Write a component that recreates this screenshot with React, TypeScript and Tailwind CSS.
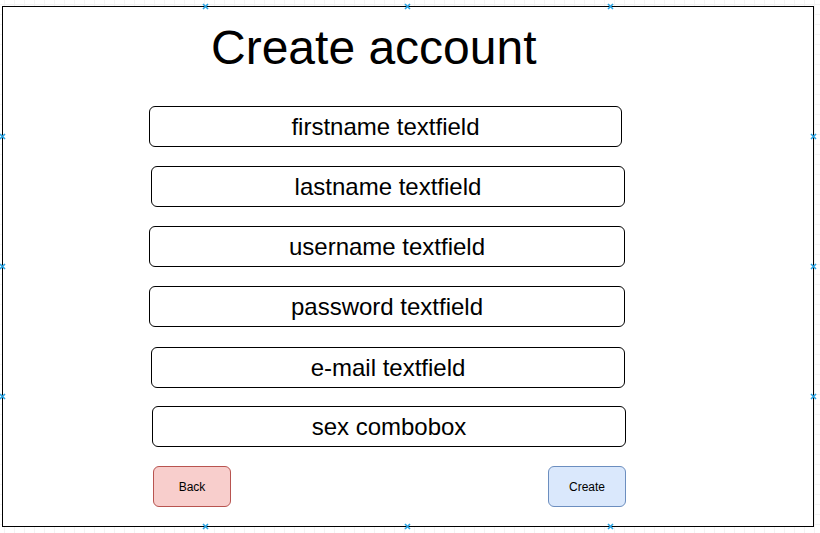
import React from "react";

const fields = [
  { label: "firstname textfield", cls: "ml-[146px] w-[473px] mt-[34px]" },
  { label: "lastname textfield", cls: "ml-[148px] w-[474px] mt-[19px]" },
  { label: "username textfield", cls: "ml-[146px] w-[476px] mt-[19px]" },
  { label: "password textfield", cls: "ml-[146px] w-[476px] mt-[19px]" },
  { label: "e-mail textfield", cls: "ml-[148px] w-[474px] mt-[20px]" },
  { label: "sex combobox", cls: "ml-[149px] w-[474px] mt-[18px]" },
];

// draw.io selection handles (x, y in page coords)
const handles = [
  [205, 6], [407, 6], [610, 6],
  [205, 526], [407, 526], [610, 526],
  [2, 136], [2, 266], [2, 396],
  [813, 136], [813, 266], [813, 396],
];

function Handle({ x, y }: { x: number; y: number }) {
  return (
    <svg
      className="absolute"
      style={{ left: x - 3, top: y - 3 }}
      width="7"
      height="7"
      viewBox="0 0 7 7"
    >
      <path d="M1 1L6 6M6 1L1 6" stroke="#29a3e3" strokeWidth="1.6" />
    </svg>
  );
}

export default function App() {
  return (
    <div className="relative w-[820px] h-[533px] overflow-hidden bg-white bg-[linear-gradient(to_right,#f3f3f3_1px,transparent_1px),linear-gradient(to_bottom,#f3f3f3_1px,transparent_1px)] bg-[size:10px_10px] bg-[position:4px_4px] pt-[6px] pl-[2px] font-['Liberation_Sans',Arial,sans-serif] text-black">
      <div className="flex flex-col w-[812px] h-[521px] border border-black bg-white">
        <h1 className="ml-[208px] mt-[17px] h-[48px] text-[48px] leading-[48px] font-normal">
          Create account
        </h1>

        {fields.map((f) => (
          <div
            key={f.label}
            className={`${f.cls} h-[41px] flex items-center justify-center rounded-[6px] border border-black text-[24px] leading-none`}
          >
            {f.label}
          </div>
        ))}

        <div className="flex mt-[19px] ml-[150px] w-[473px] justify-between">
          <button className="w-[78px] h-[41px] rounded-[6px] border border-[#b85450] bg-[#f8cecc] text-[12px]">
            Back
          </button>
          <button className="w-[78px] h-[41px] rounded-[6px] border border-[#6c8ebf] bg-[#dae8fc] text-[12px]">
            Create
          </button>
        </div>
      </div>

      {handles.map(([x, y]) => (
        <Handle key={`${x}-${y}`} x={x} y={y} />
      ))}
    </div>
  );
}
